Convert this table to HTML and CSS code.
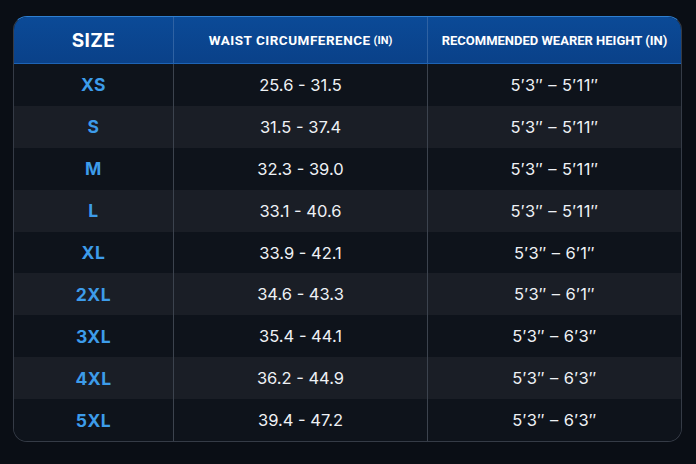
FILE: index.html
```html
<!DOCTYPE html>
<html>
<head>
<meta charset="utf-8">
<link rel="stylesheet" href="styles.css">
</head>
<body>
<div class="page">
  <div class="table">
    <div class="row head">
      <div class="cell size-h">SIZE</div>
      <div class="cell waist-h">WAIST CIRCUMFERENCE <span class="unit">(IN)</span></div>
      <div class="cell height-h">RECOMMENDED WEARER HEIGHT (IN)</div>
    </div>
    <div class="row dark"><div class="cell size">XS</div><div class="cell">25.6 - 31.5</div><div class="cell ht">5′3″ – 5′11″</div></div>
    <div class="row light"><div class="cell size">S</div><div class="cell">31.5 - 37.4</div><div class="cell ht">5′3″ – 5′11″</div></div>
    <div class="row dark"><div class="cell size">M</div><div class="cell">32.3 - 39.0</div><div class="cell ht">5′3″ – 5′11″</div></div>
    <div class="row light"><div class="cell size">L</div><div class="cell">33.1 - 40.6</div><div class="cell ht">5′3″ – 5′11″</div></div>
    <div class="row dark"><div class="cell size">XL</div><div class="cell">33.9 - 42.1</div><div class="cell ht">5′3″ – 6′1″</div></div>
    <div class="row light"><div class="cell size">2XL</div><div class="cell">34.6 - 43.3</div><div class="cell ht">5′3″ – 6′1″</div></div>
    <div class="row dark"><div class="cell size">3XL</div><div class="cell">35.4 - 44.1</div><div class="cell ht">5′3″ – 6′3″</div></div>
    <div class="row light"><div class="cell size">4XL</div><div class="cell">36.2 - 44.9</div><div class="cell ht">5′3″ – 6′3″</div></div>
    <div class="row dark"><div class="cell size">5XL</div><div class="cell">39.4 - 47.2</div><div class="cell ht">5′3″ – 6′3″</div></div>
  </div>
</div>
</body>
</html>
```

FILE: styles.css
```css
html, body {
  margin: 0;
  padding: 0;
  background: #0a0e15;
  width: 696px;
  height: 464px;
  overflow: hidden;
}
.page {
  padding: 16px 14px 0 13px;
  font-family: Inter, "Noto Sans", sans-serif;
}
.table {
  width: 669px;
  border: 1px solid #353b46;
  border-top-color: #2f7fd0;
  border-radius: 14px;
  overflow: hidden;
  box-sizing: border-box;
  background: #0e131b;
}
.row {
  display: grid;
  grid-template-columns: 160px 254px 1fr;
  height: 41.9px;
}
.row.head {
  height: 47px;
  background: linear-gradient(180deg, #0b4a97 0%, #0a4189 100%);
  border-bottom: 1px solid #1d63b5;
  box-sizing: border-box;
}
.cell {
  display: flex;
  align-items: center;
  justify-content: center;
  color: #eef1f5;
  font-size: 16.5px;
  border-right: 1px solid #3c434e;
}
.cell.ht { letter-spacing: 0.4px; }
.cell:last-child { border-right: none; }
.head .cell {
  font-family: Roboto, Inter, sans-serif;
  font-weight: 700;
  color: #ffffff;
  border-right-color: #2f62a3;
}
.head .cell.size-h {
  font-family: Inter, sans-serif;
  font-size: 19px;
  letter-spacing: 0.4px;
}
.head .cell.waist-h {
  font-size: 13.5px;
  letter-spacing: 0.5px;
}
.head .cell.height-h {
  font-size: 13px;
}
.unit {
  font-size: 11px;
  margin-left: 3px;
  letter-spacing: 0;
}
.dark { background: #0e131b; }
.light { background: #1a1e26; }
.cell.size {
  color: #3d9cea;
  font-weight: 700;
  font-size: 17.5px;
  letter-spacing: 0.5px;
}
```
